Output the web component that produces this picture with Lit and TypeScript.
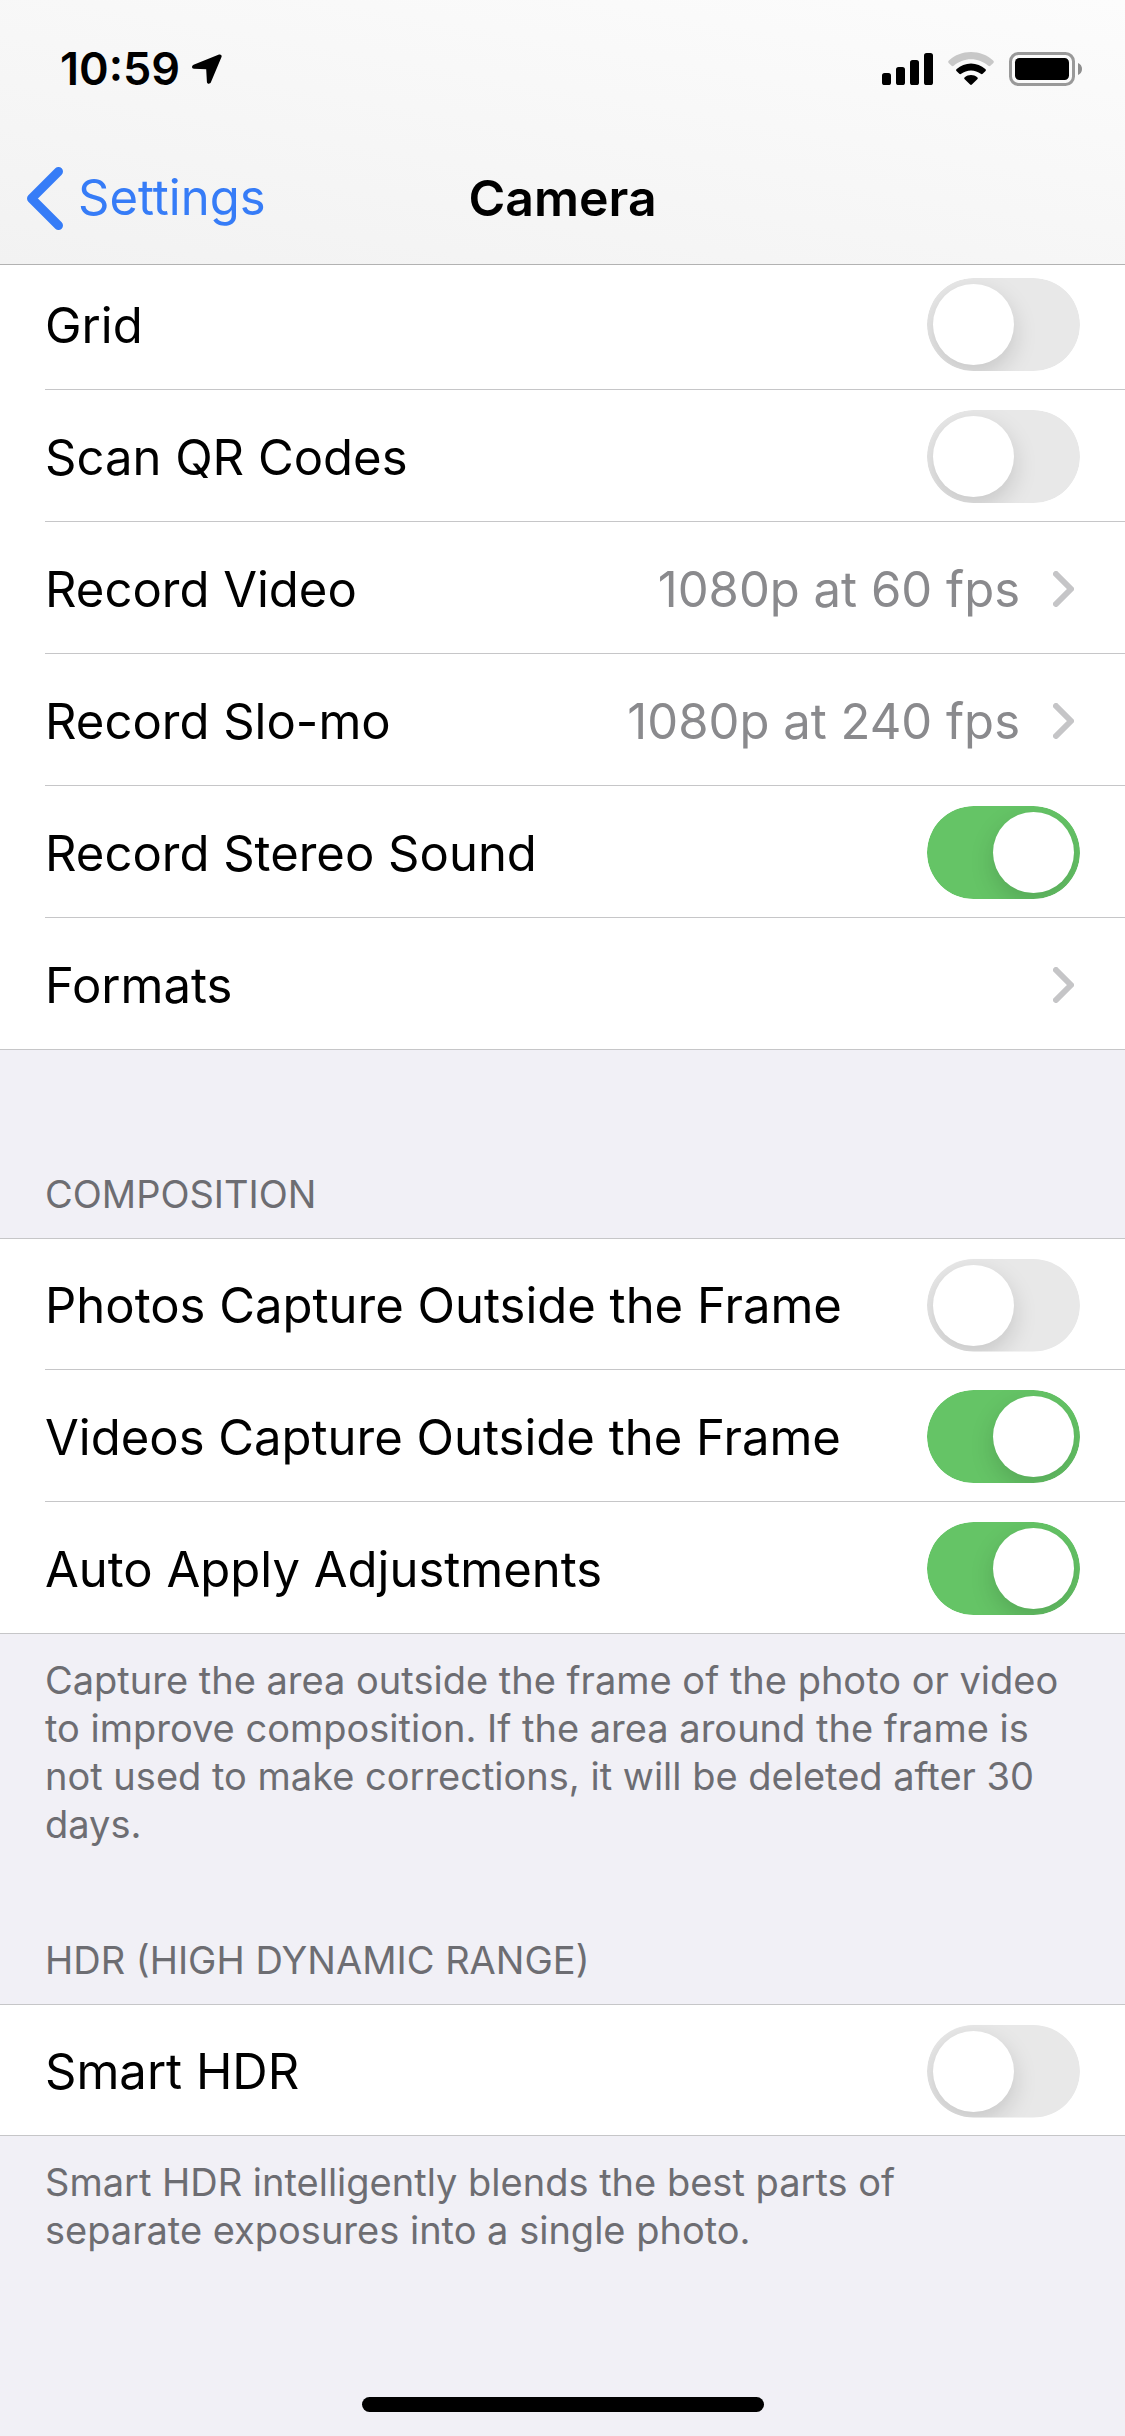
import { LitElement, html, css, svg, nothing } from "lit";
import { customElement, property, state } from "lit/decorators.js";

interface Item {
  id: string;
  label: string;
  on?: boolean;
  value?: string;
}

interface Group {
  title?: string;
  items: Item[];
  note?: string;
}

const initialGroups: Group[] = [
  {
    items: [
      { id: "grid", label: "Grid", on: false },
      { id: "qr", label: "Scan QR Codes", on: false },
      { id: "video", label: "Record Video", value: "1080p at 60 fps" },
      { id: "slomo", label: "Record Slo-mo", value: "1080p at 240 fps" },
      { id: "stereo", label: "Record Stereo Sound", on: true },
      { id: "formats", label: "Formats" },
    ],
  },
  {
    title: "COMPOSITION",
    items: [
      { id: "photos-outside", label: "Photos Capture Outside the Frame", on: false },
      { id: "videos-outside", label: "Videos Capture Outside the Frame", on: true },
      { id: "auto-apply", label: "Auto Apply Adjustments", on: true },
    ],
    note: "Capture the area outside the frame of the photo or video to improve composition. If the area around the frame is not used to make corrections, it will be deleted after 30 days.",
  },
  {
    title: "HDR (HIGH DYNAMIC RANGE)",
    items: [{ id: "smart-hdr", label: "Smart HDR", on: false }],
    note: "Smart HDR intelligently blends the best parts of separate\u00a0exposures into a single photo.",
  },
];

@customElement("status-bar")
class StatusBar extends LitElement {
  static styles = css`
    :host {
      display: flex;
      align-items: center;
      justify-content: space-between;
      box-sizing: border-box;
      min-height: 132px;
      padding: 6px 42px 0 60px;
    }
    .side {
      display: flex;
      align-items: center;
    }
    .left {
      gap: 12px;
    }
    .right {
      gap: 15px;
    }
    .time {
      font-size: 45px;
      font-weight: 600;
      line-height: 54px;
    }
    svg {
      display: block;
    }
  `;

  render() {
    return html`
      <div class="side left">
        <span class="time">10:59</span>
        <svg width="30" height="30" viewBox="0 0 30 30" aria-hidden="true">
          <path
            d="M27 .6 1.6 10.8C-.6 11.7-.4 14.6 1.9 14.7L14.2 15.2 14.9 27.7C15 30.2 18 30.4 18.9 28.3L29.5 3C30.1 1.3 28.7-.1 27 .6Z"
          />
        </svg>
      </div>
      <div class="side right">
        <svg width="51" height="34" viewBox="0 0 51 34" aria-hidden="true">
          ${[
            [0, 21],
            [14, 15],
            [28, 8],
            [42, 1],
          ].map(([x, y]) => svg`<rect x=${x} y=${y} width="9" height=${33 - y} rx="2.6" />`)}
        </svg>
        <svg width="46" height="34" viewBox="0 0 46 34" aria-hidden="true">
          <path
            fill="#c8c8c8"
            d="M.9 11.3C-.1 10.3-.1 9.3.9 8.4 7 3 14.6 0 23 0S39 3 45.1 8.4C46.1 9.3 46.1 10.3 45.1 11.3L42.4 13.8C41.8 14.4 41 14.4 40.3 13.8 35.5 9.6 29.5 7.2 23 7.2S10.5 9.6 5.7 13.8C5 14.4 4.2 14.4 3.6 13.8Z"
          />
          <path
            d="M8.7 19.2C7.9 18.5 7.9 17.6 8.7 16.9 12.6 13.5 17.6 11.4 23 11.4S33.4 13.5 37.3 16.9C38.1 17.6 38.1 18.5 37.3 19.2L34.7 21.8C34.1 22.3 33.4 22.3 32.8 21.8 30.1 19.7 26.7 18.4 23 18.4S15.9 19.7 13.2 21.8C12.6 22.3 11.9 22.3 11.3 21.8Z"
          />
          <path
            d="M16.7 27.2C16 26.5 16 25.8 16.8 25.2 18.5 23.8 20.7 23 23 23S27.5 23.8 29.2 25.2C30 25.8 30 26.5 29.3 27.2L23.9 32.6C23.3 33.2 22.7 33.2 22.1 32.6Z"
          />
        </svg>
        <svg width="74" height="34" viewBox="0 0 74 34" aria-hidden="true">
          <rect x="1.5" y="1.5" width="63" height="31" rx="8" fill="none" stroke="#999" stroke-width="3" />
          <rect x="6" y="6" width="54" height="22" rx="4.5" />
          <path d="M69 11C71.5 12 73 14.2 73 17S71.5 22 69 23Z" fill="#8e8e8e" />
        </svg>
      </div>
    `;
  }
}

@customElement("settings-row")
class SettingsRow extends LitElement {
  @property({ attribute: false }) item!: Item;

  static styles = css`
    :host {
      display: block;
    }
    .row {
      display: flex;
      align-items: center;
      gap: 33px;
      box-sizing: border-box;
      height: 100%;
      padding: 2px 45px 0 0;
      color: #000;
      text-decoration: none;
      font-size: 49px;
      line-height: 60px;
    }
    .label,
    .value {
      padding-top: 2px;
    }
    .label {
      flex: 1;
    }
    .value {
      color: #8a8a8d;
    }
    .chevron {
      display: block;
      flex: none;
      margin-right: 6px;
    }
    .switch {
      appearance: none;
      flex: none;
      box-sizing: border-box;
      width: 153px;
      height: 93px;
      margin: 0;
      padding: 6px;
      border-radius: 47px;
      background: #e8e8e8;
      clip-path: inset(0 round 47px);
      cursor: pointer;
    }
    .switch::before {
      content: "";
      display: block;
      width: 81px;
      height: 81px;
      border-radius: 50%;
      background: #fff;
      box-shadow: 0 9px 24px rgba(0, 0, 0, 0.15);
    }
    .switch:checked {
      background: #65c466;
    }
    .switch:checked::before {
      margin-left: auto;
    }
  `;

  render() {
    const { id, label, on, value } = this.item;
    if (on !== undefined) {
      return html`
        <div class="row">
          <label class="label" for=${id}>${label}</label>
          <input class="switch" id=${id} type="checkbox" role="switch" .checked=${on} />
        </div>
      `;
    }
    return html`
      <a class="row" href="#${id}">
        <span class="label">${label}</span>
        ${value ? html`<span class="value">${value}</span>` : nothing}
        <svg class="chevron" width="21" height="36" viewBox="0 0 21 36" aria-hidden="true">
          <path
            d="M3 3 18 18 3 33"
            fill="none"
            stroke="#c5c5c7"
            stroke-width="6"
            stroke-linecap="round"
            stroke-linejoin="round"
          />
        </svg>
      </a>
    `;
  }
}

@customElement("app-root")
class AppRoot extends LitElement {
  @state() private groups = initialGroups;

  static styles = css`
    :host {
      display: flex;
      flex-direction: column;
      min-height: 100vh;
      background: #f1f0f6;
      color: #000;
      font-family: Inter, "Liberation Sans", sans-serif;
    }
    .top {
      position: relative;
      z-index: 1;
      border-bottom: 1px solid #b2b2b2;
      background: linear-gradient(190deg, #fcfcfc, #f2f2f2);
    }
    .nav {
      display: grid;
      grid-template-columns: 1fr auto 1fr;
      align-items: center;
      min-height: 132px;
      padding: 0 27px;
      font-size: 49px;
      line-height: 60px;
    }
    .back {
      display: flex;
      align-items: center;
      gap: 15px;
      color: #367cf7;
      text-decoration: none;
    }
    .back svg {
      display: block;
    }
    .title {
      margin: 0;
      font-size: 50px;
      font-weight: 600;
    }
    .content {
      margin-top: -7px;
    }
    .list {
      margin: 0;
      padding: 0;
      list-style: none;
      background: #fff;
      border-bottom: 1px solid #c6c6c8;
    }
    .entry {
      display: grid;
      box-sizing: border-box;
      min-height: 132px;
      margin-left: 45px;
      border-bottom: 1px solid #c6c6c8;
    }
    .entry:last-child {
      min-height: 131px;
      border-bottom: 0;
    }
    .group + .group .list {
      border-top: 1px solid #c6c6c8;
    }
    .group + .group .entry:first-child {
      min-height: 131px;
    }
    .group + .group .entry:only-child {
      min-height: 130px;
    }
    .heading,
    .note {
      margin: 0;
      color: #6d6d72;
      font-size: 38px;
      font-weight: 400;
      line-height: 48px;
    }
    .heading {
      padding: 88px 45px 20px;
    }
    .group:nth-child(2) .heading {
      padding-top: 120px;
    }
    .note {
      padding: 22px 45px 0;
    }
    .home {
      width: 402px;
      height: 15px;
      margin: auto auto 24px;
      border-radius: 8px;
      background: #000;
    }
  `;

  render() {
    return html`
      <header class="top">
        <status-bar></status-bar>
        <nav class="nav">
          <a class="back" href="#settings">
            <svg width="36" height="63" viewBox="0 0 36 63" aria-hidden="true">
              <path
                d="M31.5 4.5 4.5 31.5 31.5 58.5"
                fill="none"
                stroke="currentColor"
                stroke-width="9"
                stroke-linecap="round"
                stroke-linejoin="round"
              />
            </svg>
            <span>Settings</span>
          </a>
          <h1 class="title">Camera</h1>
        </nav>
      </header>
      <main class="content">
        ${this.groups.map(
          (group) => html`
            <section class="group">
              ${group.title ? html`<h2 class="heading">${group.title}</h2>` : nothing}
              <ul class="list">
                ${group.items.map(
                  (item) => html`<li class="entry"><settings-row .item=${item}></settings-row></li>`,
                )}
              </ul>
              ${group.note ? html`<p class="note">${group.note}</p>` : nothing}
            </section>
          `,
        )}
      </main>
      <div class="home"></div>
    `;
  }
}
